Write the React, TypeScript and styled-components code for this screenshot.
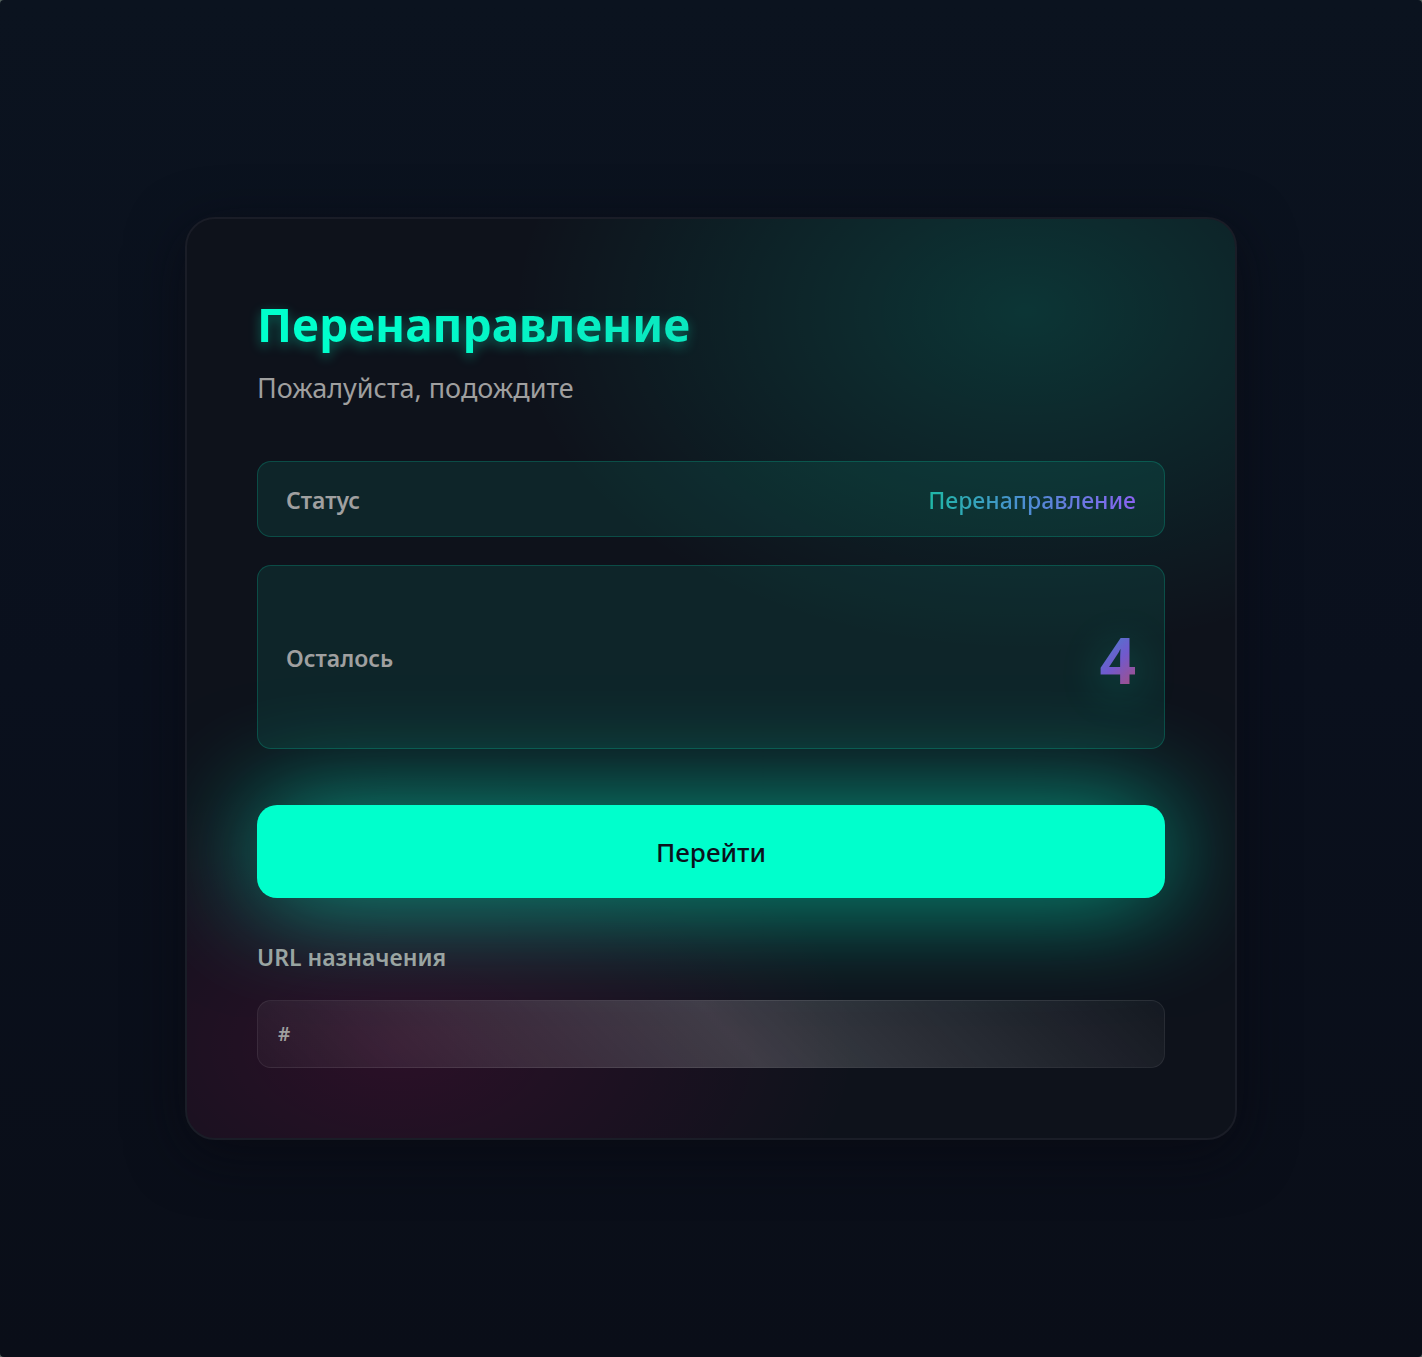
import React from 'react';
import styled, { createGlobalStyle } from 'styled-components';

const GlobalStyle = createGlobalStyle`
  *, *::before, *::after { box-sizing: border-box; }
  body {
    margin: 0;
    background: #56645f;
    font-family: 'Noto Sans', 'Open Sans', sans-serif;
  }
`;

const Page = styled.main`
  min-height: 100vh;
  display: flex;
  align-items: center;
  justify-content: center;
  padding: 32px;
  border-radius: 4px;
  background: linear-gradient(180deg, #0b131f 0%, #0a101d 50%, #0a0e18 100%);
`;

const Card = styled.section`
  width: 100%;
  max-width: 1052px;
  padding: 70px;
  border: 2px solid #1a1d27;
  border-radius: 30px;
  overflow: hidden;
  background:
    radial-gradient(49% 37% at 80% 10%, rgba(0, 255, 204, 0.15), transparent),
    radial-gradient(44% 30% at 20% 90%, rgba(255, 0, 128, 0.12), transparent),
    #0e121b;
  box-shadow: 0 14px 56px rgba(8, 8, 16, 0.6);
`;

const Header = styled.header`
  margin-bottom: 53px;
`;

const Title = styled.h1`
  margin: 0;
  font-size: 46px;
  font-weight: 700;
  line-height: 70px;
  color: transparent;
  background: linear-gradient(90deg, #00ffcc 10%, #18c6ac 100%);
  background-clip: text;
  filter: drop-shadow(0 4px 6px rgba(0, 255, 204, 0.35));
`;

const Subtitle = styled.p`
  margin: 9px 0 0;
  font-size: 27px;
  line-height: 40px;
  color: #9f9f9f;
`;

const Rows = styled.dl`
  display: grid;
  gap: 28px;
  margin: 0 0 56px;
`;

const Row = styled.div`
  display: flex;
  align-items: center;
  justify-content: space-between;
  padding: 21px 28px 19px;
  border: 1px solid rgba(0, 255, 204, 0.18);
  border-radius: 14px;
  background: rgba(24, 232, 192, 0.09);
`;

const RowLabel = styled.dt`
  font-size: 23px;
  font-weight: 600;
  line-height: 34px;
  color: #a0a0a0;
`;

const Status = styled.dd`
  margin: 0;
  font-size: 23px;
  font-weight: 500;
  line-height: 34px;
  color: transparent;
  background: linear-gradient(90deg, #1fb8a6 0%, #4a8fd0 45%, #8b62f2 100%);
  background-clip: text;
`;

const Countdown = styled.dd`
  margin: 0;
  padding-top: 4px;
  font-size: 64px;
  font-weight: 700;
  line-height: 138px;
  color: transparent;
  background: linear-gradient(135deg, #4a7ccc 32%, #7159cd 52%, #a84f80 76%);
  background-clip: text;
  filter: drop-shadow(0 8px 20px rgba(0, 255, 204, 0.25));
`;

const GoButton = styled.button`
  display: block;
  width: 100%;
  padding: 27px 28px 26px;
  border: 0;
  border-radius: 20px;
  font: inherit;
  font-size: 26px;
  font-weight: 500;
  line-height: 40px;
  color: #0b121d;
  background: #00ffcc;
  box-shadow: 0 0 108px rgba(0, 255, 204, 0.65);
  cursor: pointer;
`;

const UrlLabel = styled.label`
  display: block;
  margin: 41px 0 25px;
  font-size: 23px;
  font-weight: 600;
  line-height: 36px;
  color: #9aa5a2;
`;

const UrlField = styled.input`
  display: block;
  width: 100%;
  height: 68px;
  padding: 0 20px;
  border: 1px solid rgba(255, 255, 255, 0.07);
  border-radius: 14px;
  outline: 0;
  font: inherit;
  font-size: 19px;
  font-weight: 600;
  color: #a0a0a0;
  background: linear-gradient(
    45deg,
    rgba(255, 255, 255, 0.03) 0%,
    rgba(255, 255, 255, 0.18) 52%,
    rgba(255, 255, 255, 0.03) 100%
  );
`;

export default function App() {
  return (
    <>
      <GlobalStyle />
      <Page>
        <Card>
          <Header>
            <Title>Перенаправление</Title>
            <Subtitle>Пожалуйста, подождите</Subtitle>
          </Header>
          <Rows>
            <Row>
              <RowLabel>Статус</RowLabel>
              <Status>Перенаправление</Status>
            </Row>
            <Row>
              <RowLabel>Осталось</RowLabel>
              <Countdown>4</Countdown>
            </Row>
          </Rows>
          <GoButton type="button">Перейти</GoButton>
          <UrlLabel htmlFor="destination">URL назначения</UrlLabel>
          <UrlField id="destination" type="text" value="#" readOnly />
        </Card>
      </Page>
    </>
  );
}
